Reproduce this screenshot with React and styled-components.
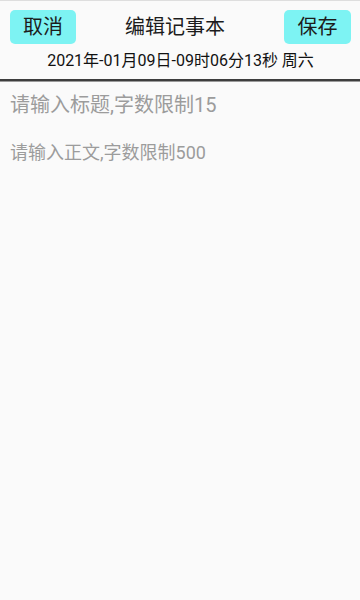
import styled, { createGlobalStyle } from "styled-components";

const GlobalStyle = createGlobalStyle`
  html, body {
    margin: 0;
    padding: 0;
    background: #fafafa;
  }
  body {
    font-family: Roboto, "Noto Sans CJK SC", sans-serif;
  }
  * {
    box-sizing: border-box;
  }
`;

const Page = styled.div`
  width: 360px;
  height: 600px;
  background: #fafafa;
  border-top: 1px solid #dedede;
  display: flex;
  flex-direction: column;
`;

const Header = styled.header`
  display: flex;
  flex-direction: column;
  padding: 9px 9px 7px 10px;
  border-bottom: 2px solid #3d3d3d;
  box-shadow: 0 1px 0 #9a9a9a;
`;

const TopRow = styled.div`
  display: flex;
  align-items: center;
  justify-content: space-between;
  height: 34px;
`;

const ActionButton = styled.button`
  width: ${({ w }) => w || 66}px;
  height: 34px;
  border: none;
  border-radius: 5px;
  background: #7df3f3;
  color: #1c1c1c;
  font-family: inherit;
  font-size: 20px;
  line-height: 34px;
  padding: 0;
  cursor: pointer;
`;

const Title = styled.h1`
  margin: 0;
  font-size: 20px;
  font-weight: 400;
  color: #1c1c1c;
  line-height: 34px;
  padding-right: 10px;
`;

const DateLine = styled.div`
  margin-top: 6px;
  text-align: center;
  font-size: 16px;
  line-height: 22px;
  color: #111;
`;

const Body = styled.main`
  flex: 1;
  display: flex;
  flex-direction: column;
`;

const TitleInput = styled.input`
  width: 100%;
  height: 48px;
  border: none;
  outline: none;
  background: transparent;
  padding: 0 10px;
  font-family: inherit;
  font-size: 20px;
  color: #222;
  &::placeholder {
    color: #9c9c9c;
  }
`;

const ContentArea = styled.textarea`
  flex: 1;
  width: 100%;
  border: none;
  outline: none;
  resize: none;
  background: transparent;
  padding: 12px 10px;
  font-family: inherit;
  font-size: 18px;
  line-height: 24px;
  color: #222;
  &::placeholder {
    color: #9c9c9c;
  }
`;

export default function App() {
  return (
    <>
      <GlobalStyle />
      <Page>
        <Header>
          <TopRow>
            <ActionButton>取消</ActionButton>
            <Title>编辑记事本</Title>
            <ActionButton w={67}>保存</ActionButton>
          </TopRow>
          <DateLine>2021年-01月09日-09时06分13秒 周六</DateLine>
        </Header>
        <Body>
          <TitleInput placeholder="请输入标题,字数限制15" />
          <ContentArea placeholder="请输入正文,字数限制500" />
        </Body>
      </Page>
    </>
  );
}
